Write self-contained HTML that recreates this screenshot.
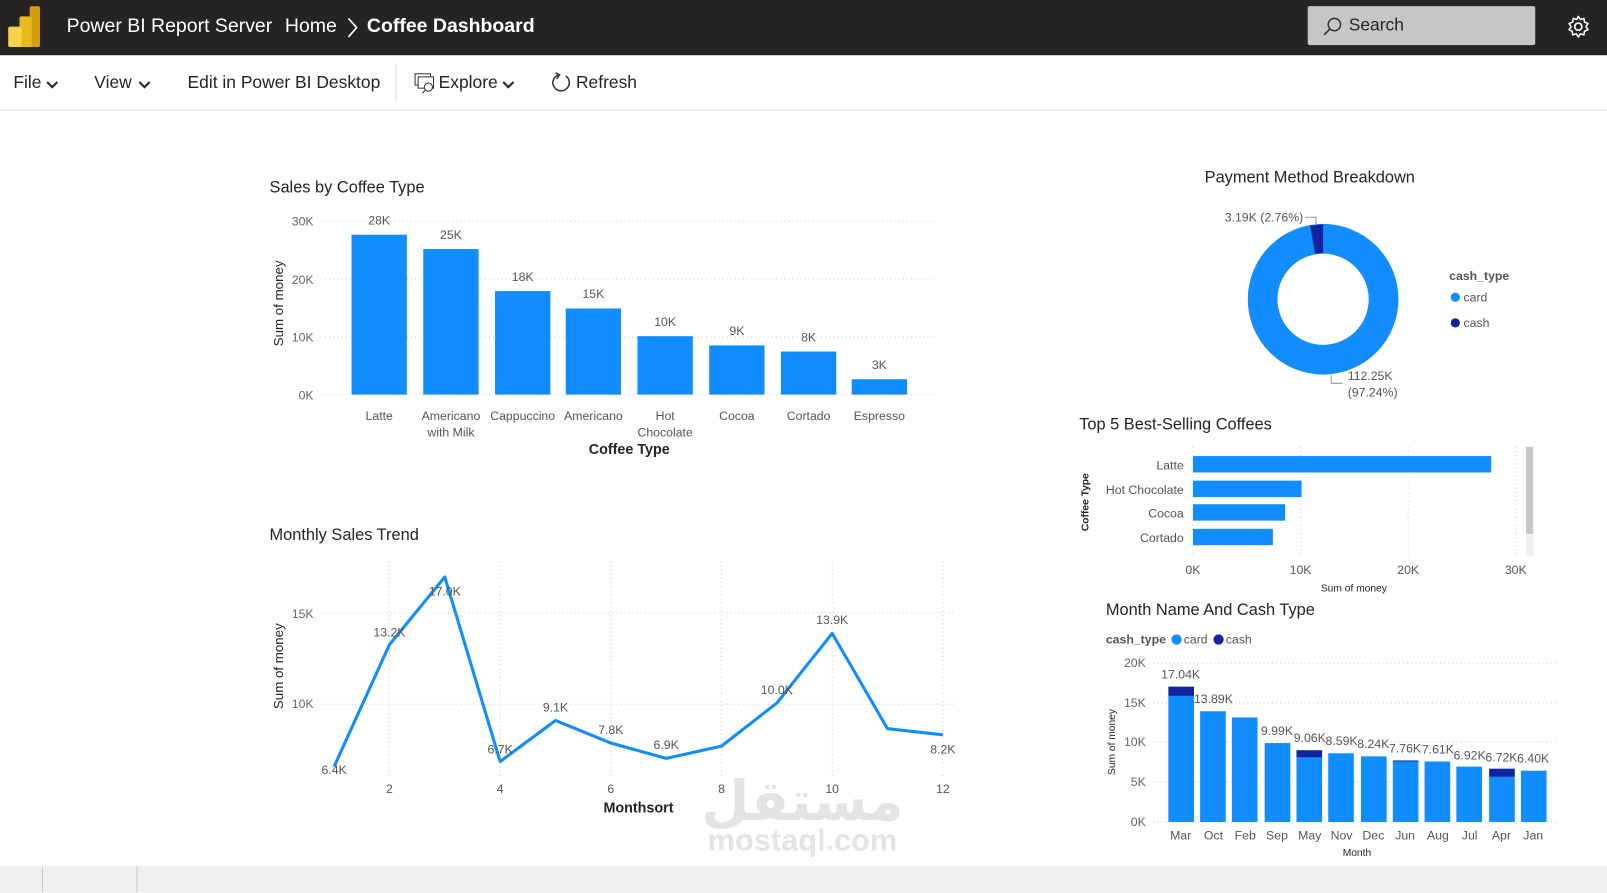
<!DOCTYPE html>
<html><head><meta charset="utf-8">
<style>
*{margin:0;padding:0;box-sizing:border-box}
body{width:1607px;height:871px;overflow:hidden;background:#fff;font-family:"Liberation Sans","DejaVu Sans",sans-serif;}
#w{position:absolute;left:0;top:0;width:1568px;height:850px;transform:scale(1.02487);transform-origin:0 0}
.hdr{position:absolute;left:0;top:0;width:1568px;height:54px;background:#252423;color:#fff}
.hdr span{position:absolute;top:15px;font-size:19px}
.tb{position:absolute;left:0;top:54px;width:1568px;height:54px;border-bottom:1px solid #e1dfdd;background:#fff}
.tb span{position:absolute;top:17px;font-size:17px;color:#252423}
.search{position:absolute;left:1276px;top:6px;width:222px;height:38px;background:#c8c6c4;border-radius:2px}
.search span{left:40px;top:9px;color:#252423;font-size:17px}
</style></head><body><div id="w">
<div class="hdr">
<svg style="position:absolute;left:7px;top:6px" width="34" height="40"><rect x="22" y="0" width="10" height="40" rx="2" fill="#d39e0f"/><rect x="12" y="10" width="12" height="30" rx="2" fill="#eab91f"/><rect x="1" y="20" width="13" height="20" rx="2" fill="#f5d34a"/></svg>
<span style="left:65px">Power BI Report Server</span>
<span style="left:278px">Home</span>
<svg style="position:absolute;left:338px;top:17px" width="12" height="20"><path d="M2 1 L10 10 L2 19" stroke="#fff" stroke-width="1.6" fill="none"/></svg>
<span style="left:358px;font-weight:bold">Coffee Dashboard</span>
<div class="search"><svg style="position:absolute;left:14px;top:10px" width="20" height="20"><circle cx="12" cy="8" r="6" stroke="#333" stroke-width="1.5" fill="none"/><path d="M7.5 12.5 L2 18" stroke="#333" stroke-width="1.6"/></svg><span>Search</span></div>
<svg style="position:absolute;left:1528px;top:14px" width="24" height="24" viewBox="0 0 24 24"><circle cx="12" cy="12" r="3.5" stroke="#fff" stroke-width="1.6" fill="none"/><path d="M12 2l2 3 3.5-1 .5 3.5 3.5 1.5-2 3 2 3-3.5 1.5-.5 3.5-3.5-1-2 3-2-3-3.5 1-.5-3.5L3 15l2-3-2-3 3.5-1.5L7 4l3.5 1z" stroke="#fff" stroke-width="1.5" fill="none" stroke-linejoin="round"/></svg>
</div>
<div class="tb">
<span style="left:13px">File</span><svg style="position:absolute;left:45px;top:25px" width="12" height="8"><path d="M1 1l5 5 5-5" stroke="#252423" stroke-width="2" fill="none"/></svg>
<span style="left:92px">View</span><svg style="position:absolute;left:135px;top:25px" width="12" height="8"><path d="M1 1l5 5 5-5" stroke="#252423" stroke-width="2" fill="none"/></svg>
<span style="left:183px">Edit in Power BI Desktop</span>
<div style="position:absolute;left:386px;top:8px;width:1px;height:38px;background:#e1dfdd"></div>
<svg style="position:absolute;left:404px;top:16px" width="22" height="22"><rect x="1" y="2" width="15" height="11" stroke="#333" fill="none"/><rect x="4" y="5" width="15" height="11" stroke="#333" fill="#fff"/><circle cx="14" cy="15" r="4" stroke="#333" fill="#fff"/><path d="M11 18l-3 3" stroke="#333"/></svg>
<span style="left:428px">Explore</span><svg style="position:absolute;left:490px;top:25px" width="12" height="8"><path d="M1 1l5 5 5-5" stroke="#252423" stroke-width="2" fill="none"/></svg>
<svg style="position:absolute;left:537px;top:16px" width="22" height="22"><path d="M8 3 A8 8 0 1 0 15 4" stroke="#333" stroke-width="1.5" fill="none"/><path d="M5 1 L9 3 L6 7" stroke="#333" stroke-width="1.5" fill="none"/></svg>
<span style="left:562px">Refresh</span>
</div>
<div style="position:absolute;left:0;top:845px;width:1568px;height:26px;background:#f0f0f0"></div>
<div style="position:absolute;left:0;top:845px;width:42px;height:26px;border-right:1px solid #ccc"></div>
<div style="position:absolute;left:133px;top:845px;width:1px;height:26px;background:#ccc"></div>

<svg style="position:absolute;left:0;top:108px" width="1568" height="737" viewBox="0 108 1568 737" font-family="Liberation Sans, DejaVu Sans, sans-serif">
<text x="783" y="800" font-size="54" fill="#e4e4e4" text-anchor="middle" font-family="DejaVu Sans, sans-serif" font-weight="bold">مستقل</text>
<text x="783" y="830" font-size="30" fill="#e4e4e4" text-anchor="middle" font-weight="bold">mostaql.com</text>

<text x="263" y="188" font-size="16" fill="#252423">Sales by Coffee Type</text>
<g stroke="#ccc" stroke-dasharray="1 3">
<line x1="313" y1="216" x2="913" y2="216"/><line x1="313" y1="272" x2="913" y2="272"/><line x1="313" y1="329" x2="913" y2="329"/><line x1="313" y1="385" x2="913" y2="385"/></g>
<g font-size="12" fill="#666" text-anchor="end"><text x="306" y="220">30K</text><text x="306" y="277">20K</text><text x="306" y="333">10K</text><text x="306" y="390">0K</text></g>
<text transform="translate(276,296) rotate(-90)" font-size="13" fill="#252423" text-anchor="middle">Sum of money</text>
<g fill="#118DFF">
<rect x="343" y="229" width="54" height="156"/><rect x="413" y="243" width="54" height="142"/><rect x="483" y="284" width="54" height="101"/><rect x="552" y="301" width="54" height="84"/><rect x="622" y="328" width="54" height="57"/><rect x="692" y="337" width="54" height="48"/><rect x="762" y="343" width="54" height="42"/><rect x="831" y="370" width="54" height="15"/></g>
<g font-size="12" fill="#555" text-anchor="middle">
<text x="370" y="219">28K</text><text x="440" y="233">25K</text><text x="510" y="274">18K</text><text x="579" y="291">15K</text><text x="649" y="318">10K</text><text x="719" y="327">9K</text><text x="789" y="333">8K</text><text x="858" y="360">3K</text>
<text x="370" y="410">Latte</text><text x="440" y="410">Americano</text><text x="440" y="426">with Milk</text><text x="510" y="410">Cappuccino</text><text x="579" y="410">Americano</text><text x="649" y="410">Hot</text><text x="649" y="426">Chocolate</text><text x="719" y="410">Cocoa</text><text x="789" y="410">Cortado</text><text x="858" y="410">Espresso</text></g>
<text x="614" y="443" font-size="14" fill="#252423" text-anchor="middle" font-weight="bold">Coffee Type</text>

<text x="263" y="527" font-size="16" fill="#252423">Monthly Sales Trend</text>
<g stroke="#ccc" stroke-dasharray="1 3">
<line x1="313" y1="598" x2="930" y2="598"/><line x1="313" y1="687" x2="930" y2="687"/>
<line x1="380" y1="548" x2="380" y2="760"/><line x1="488" y1="548" x2="488" y2="760"/><line x1="596" y1="548" x2="596" y2="760"/><line x1="704" y1="548" x2="704" y2="760"/><line x1="812" y1="548" x2="812" y2="760"/><line x1="920" y1="548" x2="920" y2="760"/></g>
<g font-size="12" fill="#666" text-anchor="end"><text x="306" y="603">15K</text><text x="306" y="691">10K</text></g>
<text transform="translate(276,650) rotate(-90)" font-size="13" fill="#252423" text-anchor="middle">Sum of money</text>
<polyline points="326,748 380,629 434,563 488,743 542,703 596,725 650,740 704,728 758,686 812,618 866,711 920,717" fill="none" stroke="#118DFF" stroke-width="3" stroke-linejoin="round"/>
<g font-size="12" fill="#555" text-anchor="middle">
<text x="326" y="755">6.4K</text><text x="380" y="621">13.2K</text><text x="434" y="581">17.0K</text><text x="488" y="735">6.7K</text><text x="542" y="694">9.1K</text><text x="596" y="716">7.8K</text><text x="650" y="731">6.9K</text><text x="758" y="677">10.0K</text><text x="812" y="609">13.9K</text><text x="920" y="735">8.2K</text>
<text x="380" y="774">2</text><text x="488" y="774">4</text><text x="596" y="774">6</text><text x="704" y="774">8</text><text x="812" y="774">10</text><text x="920" y="774">12</text></g>
<text x="623" y="793" font-size="14" fill="#252423" text-anchor="middle" font-weight="bold">Monthsort</text>

<text x="1278" y="178" font-size="16" fill="#252423" text-anchor="middle">Payment Method Breakdown</text>
<circle cx="1291" cy="292" r="59" fill="none" stroke="#118DFF" stroke-width="29"/>
<path d="M1291 219 A73 73 0 0 0 1278.3 220.1 L1283.2 247.7 A45 45 0 0 1 1291 247 Z" fill="#12239E"/>
<text x="1195" y="216" font-size="12" fill="#555">3.19K (2.76%)</text>
<path d="M1273 212 H1284 V220" stroke="#999" fill="none"/>
<path d="M1299 366 V374 H1310" stroke="#999" fill="none"/>
<text x="1315" y="371" font-size="12" fill="#555">112.25K</text><text x="1315" y="387" font-size="12" fill="#555">(97.24%)</text>
<text x="1414" y="273" font-size="12" fill="#555" font-weight="bold">cash_type</text>
<circle cx="1420" cy="290" r="4.5" fill="#118DFF"/><text x="1428" y="294" font-size="12" fill="#555">card</text>
<circle cx="1420" cy="315" r="4.5" fill="#12239E"/><text x="1428" y="319" font-size="12" fill="#555">cash</text>

<text x="1053" y="419" font-size="16" fill="#252423">Top 5 Best-Selling Coffees</text>
<g stroke="#ccc" stroke-dasharray="1 3"><line x1="1164" y1="436" x2="1164" y2="543"/><line x1="1269" y1="436" x2="1269" y2="543"/><line x1="1374" y1="436" x2="1374" y2="543"/><line x1="1479" y1="436" x2="1479" y2="543"/></g>
<g fill="#118DFF"><rect x="1164" y="445" width="291" height="16"/><rect x="1164" y="469" width="106" height="16"/><rect x="1164" y="492" width="90" height="16"/><rect x="1164" y="516" width="78" height="16"/></g>
<g font-size="12" fill="#555" text-anchor="end"><text x="1155" y="458">Latte</text><text x="1155" y="482">Hot Chocolate</text><text x="1155" y="505">Cocoa</text><text x="1155" y="529">Cortado</text></g>
<text transform="translate(1062,490) rotate(-90)" font-size="10" fill="#252423" text-anchor="middle" font-weight="bold">Coffee Type</text>
<rect x="1489" y="436" width="7" height="85" fill="#c8c8c8"/><rect x="1489" y="521" width="7" height="22" fill="#f0f0f0"/>
<g font-size="12" fill="#555" text-anchor="middle"><text x="1164" y="560">0K</text><text x="1269" y="560">10K</text><text x="1374" y="560">20K</text><text x="1479" y="560">30K</text></g>
<text x="1321" y="577" font-size="10" fill="#252423" text-anchor="middle">Sum of money</text>

<text x="1079" y="600" font-size="16" fill="#252423">Month Name And Cash Type</text>
<text x="1079" y="628" font-size="12" fill="#555" font-weight="bold">cash_type</text>
<circle cx="1148" cy="624" r="5" fill="#118DFF"/><text x="1155" y="628" font-size="12" fill="#555">card</text>
<circle cx="1189" cy="624" r="5" fill="#12239E"/><text x="1196" y="628" font-size="12" fill="#555">cash</text>
<g stroke="#ccc" stroke-dasharray="1 3"><line x1="1125" y1="647" x2="1520" y2="647"/><line x1="1125" y1="686" x2="1520" y2="686"/><line x1="1125" y1="724" x2="1520" y2="724"/><line x1="1125" y1="763" x2="1520" y2="763"/><line x1="1125" y1="802" x2="1520" y2="802"/></g>
<g font-size="12" fill="#666" text-anchor="end"><text x="1118" y="651">20K</text><text x="1118" y="690">15K</text><text x="1118" y="728">10K</text><text x="1118" y="767">5K</text><text x="1118" y="806">0K</text></g>
<text transform="translate(1088,724) rotate(-90)" font-size="10" fill="#252423" text-anchor="middle">Sum of money</text>
<g fill="#118DFF">
<rect x="1140" y="679" width="25" height="123"/><rect x="1171" y="694" width="25" height="108"/><rect x="1202" y="700" width="25" height="102"/><rect x="1234" y="725" width="25" height="77"/><rect x="1265" y="739" width="25" height="63"/><rect x="1296" y="735" width="25" height="67"/><rect x="1328" y="738" width="25" height="64"/><rect x="1359" y="743" width="25" height="59"/><rect x="1390" y="743" width="25" height="59"/><rect x="1421" y="748" width="25" height="54"/><rect x="1453" y="758" width="25" height="44"/><rect x="1484" y="752" width="25" height="50"/></g>
<g fill="#12239E"><rect x="1140" y="670" width="25" height="9"/><rect x="1265" y="732" width="25" height="7"/><rect x="1359" y="742" width="25" height="1"/><rect x="1453" y="750" width="25" height="8"/></g>
<g font-size="12" fill="#555" text-anchor="middle">
<text x="1152" y="662">17.04K</text><text x="1184" y="686">13.89K</text><text x="1246" y="717">9.99K</text><text x="1278" y="724">9.06K</text><text x="1309" y="727">8.59K</text><text x="1340" y="730">8.24K</text><text x="1371" y="734">7.76K</text><text x="1403" y="735">7.61K</text><text x="1434" y="741">6.92K</text><text x="1465" y="743">6.72K</text><text x="1496" y="744">6.40K</text>
<text x="1152" y="819">Mar</text><text x="1184" y="819">Oct</text><text x="1215" y="819">Feb</text><text x="1246" y="819">Sep</text><text x="1278" y="819">May</text><text x="1309" y="819">Nov</text><text x="1340" y="819">Dec</text><text x="1371" y="819">Jun</text><text x="1403" y="819">Aug</text><text x="1434" y="819">Jul</text><text x="1465" y="819">Apr</text><text x="1496" y="819">Jan</text></g>
<text x="1324" y="835" font-size="10" fill="#252423" text-anchor="middle">Month</text>
</svg>
</div></body></html>
